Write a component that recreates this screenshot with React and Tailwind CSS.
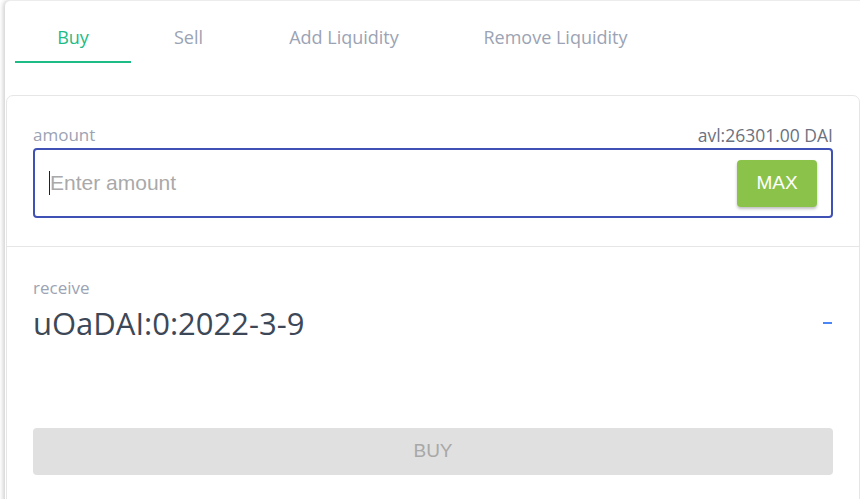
import React from "react";

const tabs = [
  { t: "Buy", w: "w-[116px]" },
  { t: "Sell", w: "w-[115px]" },
  { t: "Add Liquidity", w: "w-[196px]" },
  { t: "Remove Liquidity", w: "w-[227px]" },
];

export default function App() {
  return (
    <div className="w-[860px] h-[499px] bg-white overflow-hidden" style={{ fontFamily: '"Open Sans", "Noto Sans", sans-serif' }}>
      <div className="ml-[5px] h-[520px] rounded-tl-[6px] border-t border-[#ececec] bg-white shadow-[-2px_0_4px_rgba(0,0,0,0.18)]">
        <div className="flex ml-[10px]">
          {tabs.map(({ t, w }, i) => (
            <div
              key={t}
              className={
                w +
                " text-center pt-[24px] pb-[12px] text-[18px] leading-[24px] border-b-2 " +
                (i === 0 ? "text-[#1dbb85] border-[#1dbb85]" : "text-[#9ba3b4] border-transparent")
              }
            >
              {t}
            </div>
          ))}
        </div>
        <div className="mt-[32px] ml-[1px] border border-[#e6e6e6] rounded-t-[7px] bg-white">
          <div className="px-[26px] pt-[28px] pb-[28px]">
            <div className="flex justify-between items-center leading-[22px]">
              <span className="text-[17px] text-[#9ba3b4]">amount</span>
              <span className="text-[17.5px] text-[#6b7280]">avl:26301.00 DAI</span>
            </div>
            <div className="mt-[2px] h-[70px] border-2 border-[#3f51b5] rounded-[4px] flex items-center pl-[14px] pr-[14px]">
              <div className="flex-1 flex items-center" style={{ fontFamily: '"Liberation Sans", Arial, sans-serif' }}>
                <span className="w-px h-[24px] bg-[#222]" />
                <span className="text-[21px] text-[#a9a9a9]">Enter amount</span>
              </div>
              <div
                className="w-[80px] h-[47px] bg-[#8bc34a] rounded-[4px] shadow-[0_2px_3px_rgba(0,0,0,0.25)] flex items-center justify-center text-white text-[19px]"
                style={{ fontFamily: '"Liberation Sans", Arial, sans-serif' }}
              >
                MAX
              </div>
            </div>
          </div>
          <div className="border-t border-[#e6e6e6] px-[26px] pt-[30px] pb-[40px]">
            <div className="text-[17px] leading-[22px] text-[#9ba3b4]">receive</div>
            <div className="mt-[5px] flex items-center justify-between">
              <span className="text-[31px] leading-[38px] text-[#3c4858]">uOaDAI:0:2022-3-9</span>
              <span className="w-[9px] h-[2px] bg-[#4a86f7] mr-[1px]" />
            </div>
            <div
              className="mt-[86px] h-[47px] bg-[#e0e0e0] rounded-[4px] flex items-center justify-center text-[19px] text-[#a8a8a8]"
              style={{ fontFamily: '"Liberation Sans", Arial, sans-serif' }}
            >
              BUY
            </div>
          </div>
        </div>
      </div>
    </div>
  );
}
